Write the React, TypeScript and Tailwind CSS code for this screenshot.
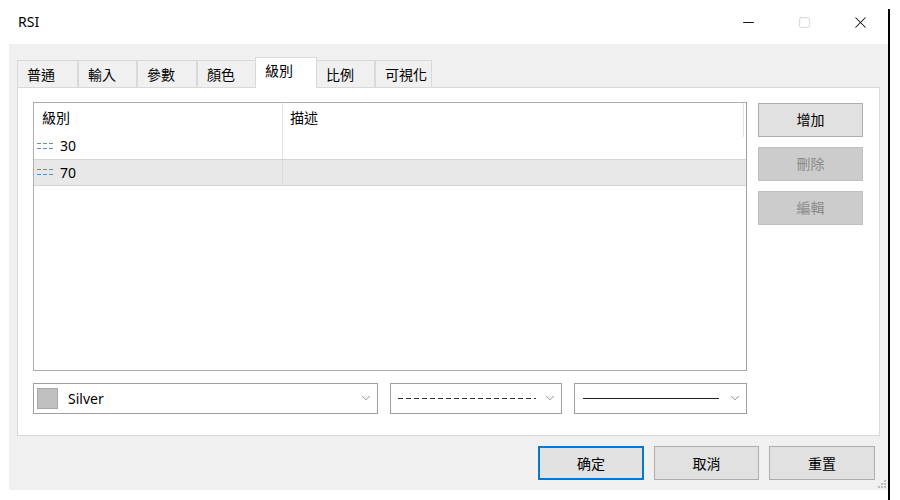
import { ChevronDown, Minus, Square, X } from 'lucide-react';

const font = { fontFamily: '"Noto Sans", "Noto Sans CJK TC", sans-serif' };

const tabs = ['普通', '輸入', '參數', '顏色', '級別', '比例', '可視化'];
const tabWidths = ['w-[61px]', 'w-[59px]', 'w-[60px]', 'w-[58px]', 'w-[62px]', 'w-[58px]', 'w-[57px]'];

function DashIcon() {
  return (
    <svg width="17" height="8" viewBox="0 0 17 8" className="shrink-0">
      <line x1="0" y1="1.5" x2="16" y2="1.5" stroke="#5b8fc4" strokeWidth="1" strokeDasharray="4 2" />
      <line x1="0" y1="6.5" x2="16" y2="6.5" stroke="#5b8fc4" strokeWidth="1" strokeDasharray="4 2" />
    </svg>
  );
}

function SideButton({ label, disabled }: { label: string; disabled?: boolean }) {
  return (
    <div
      className={
        disabled
          ? 'h-[34px] w-[105px] flex items-center justify-center border border-[#bfbfbf] bg-[#cccccc] text-[#8a8a8a] text-[14px]'
          : 'h-[34px] w-[105px] flex items-center justify-center border border-[#adadad] bg-[#e1e1e1] text-black text-[14px]'
      }
    >
      {label}
    </div>
  );
}

export default function App() {
  return (
    <div className="w-[900px] h-[500px] bg-white flex overflow-hidden text-black" style={font}>
      <div className="w-[888px] flex flex-col">
        {/* Title bar */}
        <div className="h-[44px] flex items-center">
          <span className="pl-[18px] text-[14px] leading-none">RSI</span>
          <div className="ml-auto flex items-center h-full">
            <div className="w-[56px] flex justify-center text-[#111]"><Minus size={17} strokeWidth={1.4} /></div>
            <div className="w-[56px] flex justify-center text-[#c6c6c6]"><Square size={13} strokeWidth={1.3} /></div>
            <div className="w-[56px] flex justify-center text-[#111]"><X size={19} strokeWidth={1.3} /></div>
          </div>
        </div>

        {/* Body */}
        <div className="ml-[9px] w-[879px] h-[446px] bg-[#f0f0f0] flex flex-col pl-[8px] pr-[13px] pt-[12px]">
          {/* Tabs */}
          <div className="flex items-end h-[31px] relative z-10">
            {tabs.map((t, i) =>
              i === 4 ? (
                <div
                  key={t}
                  className={`${tabWidths[i]} h-[31px] -mb-px bg-white border border-b-0 border-[#d9d9d9] pl-[9px] pt-[3px] text-[14px] leading-[20px]`}
                >
                  {t}
                </div>
              ) : (
                <div
                  key={t}
                  className={`${tabWidths[i]} h-[27px] border border-b-0 border-[#d9d9d9] ${i === 3 ? 'border-r-0' : ''} ${i === 5 ? 'border-l-0' : ''} pl-[9px] pt-[4px] text-[14px] leading-[20px]`}
                >
                  {t}
                </div>
              )
            )}
          </div>

          {/* Panel */}
          <div className="w-[863px] h-[350px] bg-white border border-[#d9d9d9] pl-[15px] pt-[14px] flex flex-col">
            <div className="flex">
              {/* List */}
              <div className="w-[714px] h-[269px] border border-[#adadad] border-r-[#a0a0a0] flex flex-col">
                <div className="h-[30px] flex text-[14px] leading-[20px] relative">
                  <div className="w-[249px] border-r border-[#e3e3e3] pl-[8px] pt-[5px]">級別</div>
                  <div className="flex-1 pl-[7px] pt-[5px]">描述</div>
                  <div className="w-px h-[34px] bg-[#e3e3e3] absolute right-[2px] top-0" />
                </div>
                <div className="h-[26px] flex text-[14px]">
                  <div className="w-[249px] border-r border-[#e3e3e3] flex items-center gap-[6px] pl-[3px]">
                    <DashIcon />
                    <span>30</span>
                  </div>
                  <div className="flex-1" />
                </div>
                <div className="h-[27px] flex text-[14px] bg-[#e8e8e8] border-y border-[#d5d5d5]">
                  <div className="w-[249px] border-r border-[#d8d8d8] flex items-center gap-[6px] pl-[3px]">
                    <DashIcon />
                    <span>70</span>
                  </div>
                  <div className="flex-1" />
                </div>
              </div>

              {/* Side buttons */}
              <div className="ml-[11px] flex flex-col gap-[10px] pt-[1px]">
                <SideButton label="增加" />
                <SideButton label="刪除" disabled />
                <SideButton label="編輯" disabled />
              </div>
            </div>

            {/* Combos */}
            <div className="flex mt-[12px] gap-[12px]">
              <div className="w-[345px] h-[31px] border border-[#a0a0a0] flex items-center pl-[3px] pr-[4px]">
                <div className="w-[21px] h-[21px] bg-[#c0c0c0] border border-[#a8a8a8]" />
                <span className="ml-[10px] text-[14px]">Silver</span>
                <ChevronDown size={14} strokeWidth={1.3} className="ml-auto text-[#666]" />
              </div>
              <div className="w-[172px] h-[31px] border border-[#a0a0a0] flex items-center pl-[7px] pr-[4px]">
                <svg width="138" height="3" viewBox="0 0 138 3">
                  <line x1="0" y1="1.5" x2="138" y2="1.5" stroke="#333" strokeWidth="1" strokeDasharray="5 3" />
                </svg>
                <ChevronDown size={14} strokeWidth={1.3} className="ml-auto text-[#666]" />
              </div>
              <div className="w-[173px] h-[31px] border border-[#a0a0a0] flex items-center pl-[8px] pr-[4px]">
                <div className="w-[136px] h-px bg-[#222]" />
                <ChevronDown size={14} strokeWidth={1.3} className="ml-auto text-[#666]" />
              </div>
            </div>
          </div>

          {/* Bottom buttons */}
          <div className="flex justify-end gap-[10px] mt-[10px]">
            <div className="w-[106px] h-[34px] border-2 border-[#0078d7] bg-[#e1e1e1] flex items-center justify-center text-[14px]">确定</div>
            <div className="w-[105px] h-[34px] border border-[#adadad] bg-[#e1e1e1] flex items-center justify-center text-[14px]">取消</div>
            <div className="w-[106px] h-[34px] border border-[#adadad] bg-[#e1e1e1] flex items-center justify-center text-[14px]">重置</div>
          </div>
          <div className="flex justify-end -mr-[11px]">
            <svg width="10" height="10" viewBox="0 0 10 10">
              {[[8, 0], [5, 3], [8, 3], [2, 6], [5, 6], [8, 6]].map(([x, y]) => (
                <rect key={`${x}-${y}`} x={x} y={y} width="2" height="2" fill="#bcbcbc" />
              ))}
            </svg>
          </div>
        </div>
      </div>
      <div className="w-[2px] h-[491px] mt-[9px] bg-black" />
    </div>
  );
}
